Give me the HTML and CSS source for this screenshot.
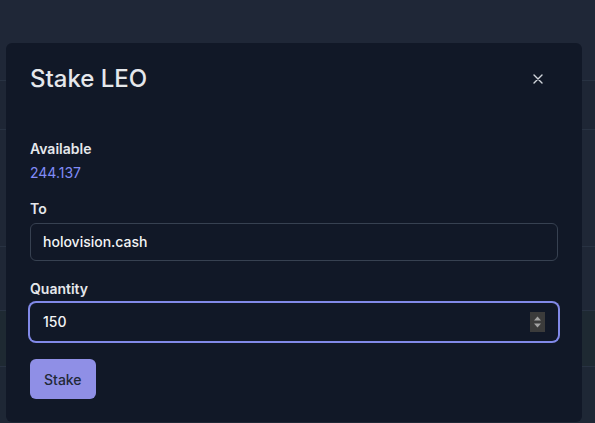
FILE: index.html
```html
<!DOCTYPE html>
<html lang="en">
<head>
<meta charset="utf-8">
<title>Stake LEO</title>
<link rel="stylesheet" href="styles.css">
</head>
<body>
<div class="page">
  <div class="bg-row bg-top"></div>
  <div class="bg-row bg-r1"></div>
  <div class="bg-row bg-r2"></div>
  <div class="bg-row bg-r3"></div>
  <div class="bg-row bg-r4"></div>
  <div class="bg-row bg-r5"></div>

  <div class="modal">
    <div class="modal-header">
      <h2 class="modal-title">Stake LEO</h2>
      <button class="close-btn" aria-label="Close">
        <svg width="10" height="10" viewBox="0 0 10 10"><path d="M1 1 L9 9 M9 1 L1 9" stroke="#d1d5db" stroke-width="1.4" stroke-linecap="round"/></svg>
      </button>
    </div>
    <div class="modal-body">
      <div class="label">Available</div>
      <div class="available">244.137</div>
      <div class="label">To</div>
      <div class="field">
        <input class="field-input" type="text" value="holovision.cash">
      </div>
      <div class="label">Quantity</div>
      <div class="field field-focus">
        <input class="field-input" type="text" value="150">
        <span class="spinner">
          <svg width="15" height="20" viewBox="0 0 15 20"><path d="M7.5 4.5 L11 8.5 L4 8.5 Z" fill="#a3a3a3"/><path d="M4 11.5 L11 11.5 L7.5 15.5 Z" fill="#a3a3a3"/></svg>
        </span>
      </div>
      <button class="stake-btn">Stake</button>
    </div>
  </div>
</div>
</body>
</html>
```

FILE: styles.css
```css
html, body {
  margin: 0;
  padding: 0;
}
body {
  background: #1f2736;
  font-family: Inter, "Noto Sans", sans-serif;
  width: 595px;
  height: 423px;
  overflow: hidden;
}
.page {
  position: relative;
  width: 595px;
  height: 423px;
}
.bg-row {
  border-bottom: 1px solid #283242;
}
.bg-top { height: 80px; background: #1f2737; }
.bg-r1 { height: 48px; background: #1e2635; }
.bg-r2 { height: 116px; background: #1f2736; }
.bg-r3 { height: 63px; background: #1f2736; }
.bg-r4 { height: 55px; background: #1e2932; }
.bg-r5 { height: 57px; background: #1e2735; border-bottom: none; }

.modal {
  position: absolute;
  left: 6px;
  top: 43px;
  width: 576px;
  box-sizing: border-box;
  background: #111827;
  border-radius: 6px;
  padding: 20px 24px 23px;
}
.modal-header {
  display: flex;
  align-items: center;
  justify-content: space-between;
  height: 32px;
}
.modal-title {
  margin: 0;
  font-size: 24px;
  line-height: 32px;
  font-weight: 500;
  color: #e5e7eb;
}
.close-btn {
  width: 40px;
  height: 32px;
  padding: 0;
  border: none;
  background: transparent;
  display: flex;
  align-items: center;
  justify-content: center;
}
.modal-body {
  margin-top: 44px;
  display: flex;
  flex-direction: column;
  align-items: flex-start;
}
.label {
  font-size: 14px;
  line-height: 20px;
  font-weight: 600;
  color: #e5e7eb;
  margin-bottom: 4px;
}
.available {
  font-size: 14px;
  line-height: 20px;
  color: #818cf8;
  margin-bottom: 16px;
}
.field {
  align-self: stretch;
  display: flex;
  align-items: center;
  height: 38px;
  box-sizing: border-box;
  border: 1px solid #374151;
  border-radius: 6px;
  padding: 0 12px;
  margin-bottom: 18px;
  background: #111827;
}
.field-focus {
  border-color: transparent;
  box-shadow: 0 0 0 2px #8189e8;
}
.field-input {
  flex: 1;
  min-width: 0;
  border: none;
  outline: none;
  background: transparent;
  padding: 0;
  font-family: Inter, "Noto Sans", sans-serif;
  font-size: 14px;
  line-height: 20px;
  font-weight: 500;
  color: #f3f4f6;
}
.spinner {
  width: 15px;
  height: 20px;
  background: #3b3b3b;
  display: flex;
}
.stake-btn {
  height: 40px;
  padding: 0 14px;
  border: none;
  border-radius: 6px;
  background: #8f8fe6;
  color: #1f2937;
  font-family: Inter, "Noto Sans", sans-serif;
  font-size: 14px;
  font-weight: 500;
}
```
